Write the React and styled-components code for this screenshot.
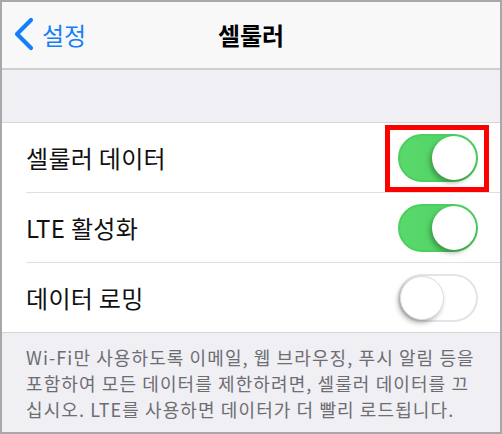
import React from "react";
import styled, { createGlobalStyle } from "styled-components";

const GlobalStyle = createGlobalStyle`
  html, body {
    margin: 0;
    padding: 0;
    background: #fff;
  }
  body {
    font-family: "Noto Sans CJK KR", "Noto Sans", sans-serif;
  }
`;

const rows = [
  { label: "셀룰러 데이터", on: true, marked: true },
  { label: "LTE 활성화", on: true },
  { label: "데이터 로밍", on: false },
];

const footerLines = [
  "Wi-Fi만 사용하도록 이메일, 웹 브라우징, 푸시 알림 등을",
  "포함하여 모든 데이터를 제한하려면, 셀룰러 데이터를 끄",
  "십시오. LTE를 사용하면 데이터가 더 빨리 로드됩니다.",
];

const App = () => {
  return (
    <>
      <GlobalStyle />
      <StFrame>
        <StNav>
          <StBack>
            <svg width="24" height="34" viewBox="0 0 24 34">
              <path d="M19 3 L5 17 L19 31" fill="none" stroke="#157efb" strokeWidth="4.2" strokeLinecap="round" strokeLinejoin="round" />
            </svg>
            <span>설정</span>
          </StBack>
          <StTitle>셀룰러</StTitle>
        </StNav>
        <StGap />
        <StList>
          {rows.map((row) => (
            <StRow key={row.label}>
              <StLabel>{row.label}</StLabel>
              {row.marked ? (
                <StMark>
                  <Toggle on={row.on} />
                </StMark>
              ) : (
                <Toggle on={row.on} />
              )}
            </StRow>
          ))}
        </StList>
        <StFooter>
          {footerLines.map((line) => (
            <StFooterLine key={line}>{line}</StFooterLine>
          ))}
        </StFooter>
      </StFrame>
    </>
  );
};

const Toggle = ({ on }) => (
  <StSwitch $on={on}>
    <StKnob $on={on} />
  </StSwitch>
);

export default App;

const StFrame = styled.div`
  width: 502px;
  height: 434px;
  box-sizing: border-box;
  border: 2px solid #a8a8a8;
  background: #efeff4;
  display: flex;
  flex-direction: column;
  overflow: hidden;
`;

const StNav = styled.header`
  position: relative;
  height: 66px;
  flex-shrink: 0;
  background: #f8f8f8;
  border-bottom: 2px solid #cfcfd3;
  display: flex;
  align-items: center;
  justify-content: center;
`;

const StBack = styled.div`
  position: absolute;
  left: 10px;
  top: 0;
  bottom: 0;
  display: flex;
  align-items: center;
  gap: 6px;
  color: #157efb;
  font-size: 24px;
  padding-bottom: 2px;
`;

const StTitle = styled.h1`
  margin: 0;
  font-size: 24px;
  font-weight: 700;
  color: #000;
  padding-bottom: 2px;
`;

const StGap = styled.div`
  height: 52px;
  flex-shrink: 0;
`;

const StList = styled.ul`
  list-style: none;
  margin: 0;
  padding: 0 0 0 24px;
  background: #fff;
  border-top: 1px solid #d6d6da;
  border-bottom: 1px solid #d6d6da;
  flex-shrink: 0;
`;

const StRow = styled.li`
  height: 70px;
  box-sizing: border-box;
  display: flex;
  align-items: center;
  justify-content: space-between;
  padding-right: 22px;
  border-bottom: 1px solid #e0e0e3;

  &:last-child {
    border-bottom: none;
    height: 69px;
  }
`;

const StLabel = styled.span`
  font-size: 24px;
  color: #111;
  letter-spacing: 0.3px;
`;

const StMark = styled.div`
  position: relative;
  display: flex;

  &::after {
    content: "";
    position: absolute;
    inset: -9px -11px -10px -13px;
    border: 5px solid #ff0000;
  }
`;

const StSwitch = styled.div`
  position: relative;
  width: 80px;
  height: 48px;
  box-sizing: border-box;
  border-radius: 24px;
  background: ${(p) => (p.$on ? "linear-gradient(90deg, #5ad86c, #4cd261)" : "#fff")};
  border: 2px solid ${(p) => (p.$on ? "#4ccf5e" : "#e4e4e6")};
  display: flex;
  align-items: center;
  justify-content: ${(p) => (p.$on ? "flex-end" : "flex-start")};
`;

const StKnob = styled.div`
  width: 44px;
  height: 44px;
  border-radius: 50%;
  background: #fff;
  box-shadow: -2px 3px 5px rgba(0, 0, 0, 0.3);
  ${(p) => (p.$on ? "" : "border: 1px solid #ddd; box-sizing: border-box;")}
`;

const StFooter = styled.div`
  padding: 11px 0 0 24px;
  font-size: 18px;
  line-height: 26px;
  color: #6d6d72;
  letter-spacing: 1.1px;
`;

const StFooterLine = styled.p`
  margin: 0;
  white-space: nowrap;
`;
